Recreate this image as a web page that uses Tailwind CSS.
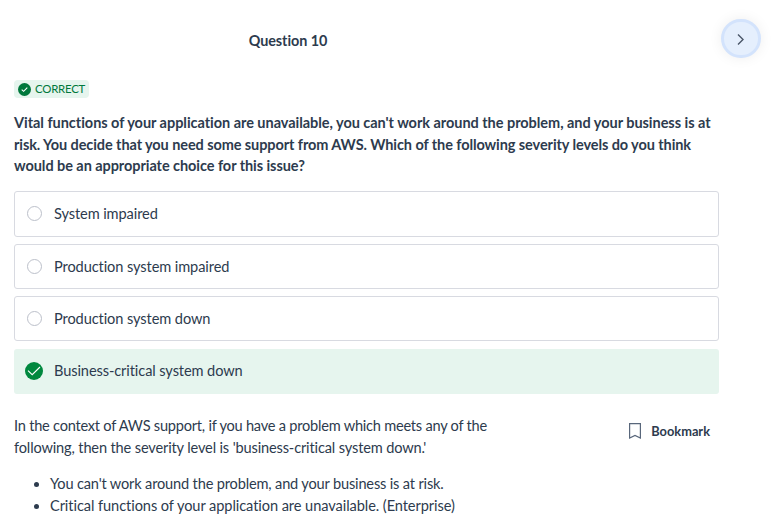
<!DOCTYPE html>
<html lang="en"><head><meta charset="utf-8"><title>Question 10</title>
<script src="https://cdn.jsdelivr.net/npm/@tailwindcss/browser@4"></script></head>
<body class="bg-white text-[#2d3b4e] font-['Lato',sans-serif] text-[14.6px] w-[775px] h-[527px] overflow-hidden [font-variant-ligatures:none]">
<header class="h-[79px] pt-[19px] pr-[14px] flex justify-between">
<h1 class="w-[576px] text-center font-bold text-[14.4px] leading-[22px] pt-[11px] tracking-[-0.06px]">Question 10</h1>
<button class="w-10 h-[39px] rounded-full bg-[#e5effd] border-3 border-[#d3e3fc] flex items-center justify-center shadow-[0_0_14px_rgba(0,0,0,0.07)]"><svg class="size-4" viewBox="0 0 16 16" fill="none" stroke="#4b5768" stroke-width="1.4"><path d="m5 3.500 5 5-5 5"/></svg></button>
</header>
<main class="pl-[14px]">
<div class="w-[75px] h-[18px] mt-px bg-[#e6f5ee] rounded-sm flex items-center gap-1 pl-1 text-[#00783c] text-[11.4px] tracking-[-0.22px]"><svg class="size-[13px]" viewBox="0 0 13 13"><circle cx="6.500" cy="6.500" r="6.500" fill="#00783c"/><path d="m3.700 6.600 1.900 1.700 3.700-3.600" fill="none" stroke="#fff" stroke-width="1.100"/></svg>CORRECT</div>
<h2 class="font-bold text-[14.5px] leading-[21.600px] mt-[14px] whitespace-nowrap"><span class="tracking-[-0.035px]">Vital functions of your application are unavailable, you can't work around the problem, and your business is at</span><br><span class="tracking-[-0.085px]">risk. You decide that you need some support from AWS. Which of the following severity levels do you think</span><br><span class="tracking-[-0.06px]">would be an appropriate choice for this issue?</span></h2>
<div class="w-[705px] mt-[14px] flex flex-col gap-[7px] tracking-[-0.1px]">
<div class="h-[46px] border border-[#d8dae1] rounded-[3px] flex items-center pl-3 gap-3"><i class="size-[15px] rounded-full border border-[#bcc0ca]"></i><span class="pt-px">System impaired</span></div>
<div class="h-[45px] border border-[#d8dae1] rounded-[3px] flex items-center pl-3 gap-3"><i class="size-[15px] rounded-full border border-[#bcc0ca]"></i><span class="pt-[2px]">Production system impaired</span></div>
<div class="h-[45px] border border-[#d8dae1] rounded-[3px] flex items-center pl-3 gap-3"><i class="size-[15px] rounded-full border border-[#bcc0ca]"></i><span class="pt-[2px]">Production system down</span></div>
<div class="h-[45px] bg-[#e6f5ee] rounded-[3px] flex items-center pl-[11px] gap-[11px] mt-px"><svg class="size-[18px]" viewBox="0 0 18 18"><circle cx="9" cy="9" r="9" fill="#00883e"/><path d="m3 8.700 4.200 4L15 5" fill="none" stroke="#fff" stroke-width="1.100"/></svg><span>Business-critical system down</span></div>
</div>
<div class="flex w-[705px] mt-[21px] justify-between leading-[22px]">
<p class="whitespace-nowrap"><span class="tracking-[-0.235px]">In the context of AWS support, if you have a problem which meets any of the</span><br><span class="tracking-[-0.15px]">following, then the severity level is 'business-critical system down.'</span></p>
<button class="flex items-center gap-[10px] h-[22px] mt-[5px] mr-[9px] font-bold text-[12.800px]"><svg class="w-3 h-4" viewBox="0 0 12 16" fill="none" stroke="#59677b" stroke-width="1.200"><path d="M.6.600h10.800v14.400L6 12.500.6 15z"/></svg>Bookmark</button>
</div>
<ul class="list-disc pl-9 mt-[14px] leading-[22px]"><li class="tracking-[-0.17px]">You can't work around the problem, and your business is at risk.</li><li class="tracking-[-0.075px]">Critical functions of your application are unavailable. (Enterprise)</li></ul>
</main></body></html>
